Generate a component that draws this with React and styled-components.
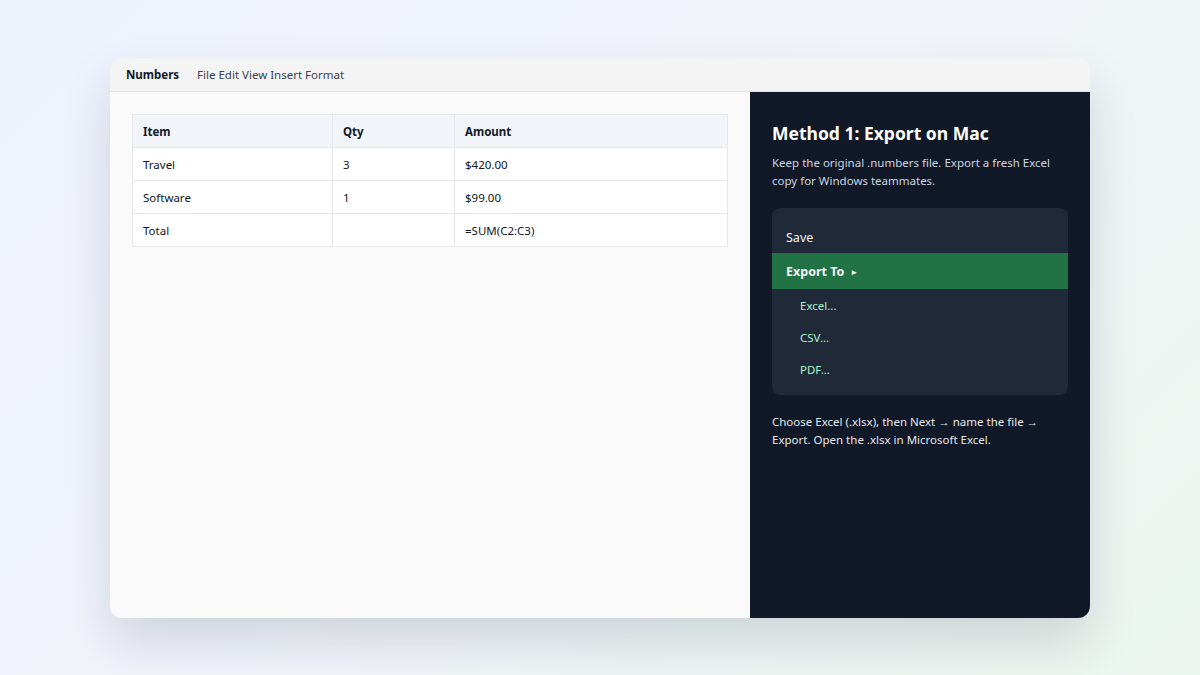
import React from 'react';
import styled, { createGlobalStyle } from 'styled-components';

const GlobalStyle = createGlobalStyle`
  html, body {
    margin: 0;
    padding: 0;
  }
  body {
    font-family: "Noto Sans", "Open Sans", sans-serif;
  }
`;

const Page = styled.div`
  width: 1200px;
  height: 675px;
  box-sizing: border-box;
  padding-top: 58px;
  display: flex;
  justify-content: center;
  align-items: flex-start;
  background: linear-gradient(135deg, #eef2fd 0%, #f1f4fa 50%, #ebf6ee 100%);
  overflow: hidden;
`;

const Window = styled.div`
  width: 980px;
  height: 560px;
  border-radius: 12px;
  overflow: hidden;
  display: flex;
  flex-direction: column;
  box-shadow: 0 24px 50px rgba(15, 23, 42, 0.14);
`;

const TitleBar = styled.div`
  height: 33px;
  flex-shrink: 0;
  display: flex;
  align-items: center;
  gap: 18px;
  padding: 0 16px;
  background: #f4f4f5;
  border-bottom: 1px solid #e4e4e7;
  font-size: 11.5px;
`;

const AppName = styled.span`
  font-weight: 700;
  color: #111827;
`;

const MenuNames = styled.span`
  color: #374151;
`;

const Body = styled.div`
  flex: 1;
  display: flex;
  min-height: 0;
`;

const Sheet = styled.div`
  width: 640px;
  box-sizing: border-box;
  padding: 22px;
  background: #fafafa;
`;

const Table = styled.table`
  width: 596px;
  border-collapse: collapse;
  background: #ffffff;
  font-size: 11.5px;
  color: #111827;
`;

const Cell = styled.td`
  height: 33px;
  box-sizing: border-box;
  padding: 0 10px;
  border: 1px solid #e5e7eb;
  font-weight: ${(p) => (p.$head ? 700 : 400)};
  background: ${(p) => (p.$head ? '#f1f5f9' : '#ffffff')};
  width: ${(p) => p.$w || 'auto'};
`;

const Panel = styled.div`
  flex: 1;
  box-sizing: border-box;
  padding: 28px 22px;
  background: #111827;
  color: #ffffff;
`;

const Heading = styled.h2`
  margin: 0 0 8px;
  font-size: 17.5px;
  font-weight: 700;
  line-height: 26px;
`;

const Text = styled.p`
  margin: 0;
  font-size: 11.5px;
  line-height: 18px;
  color: ${(p) => p.$color || '#cbd5e1'};
`;

const Menu = styled.div`
  margin: 18px 0 18px;
  padding: 13px 0 10px;
  background: #1f2937;
  border-radius: 8px;
`;

const MenuItem = styled.div`
  display: flex;
  align-items: center;
  gap: 6px;
  height: ${(p) => (p.$active ? '36px' : '32px')};
  padding-left: ${(p) => (p.$sub ? '28px' : '14px')};
  font-size: ${(p) => (p.$sub ? '11.5px' : '12.5px')};
  font-weight: ${(p) => (p.$active ? 700 : 400)};
  color: ${(p) => (p.$sub ? '#a7f3d0' : '#f3f4f6')};
  background: ${(p) => (p.$active ? '#217346' : 'transparent')};
`;

const Arrow = styled.span`
  font-size: 8px;
`;

const rows = [
  ['Travel', '3', '$420.00'],
  ['Software', '1', '$99.00'],
  ['Total', '', '=SUM(C2:C3)'],
];

export default function App() {
  return (
    <Page>
      <GlobalStyle />
      <Window>
        <TitleBar>
          <AppName>Numbers</AppName>
          <MenuNames>File Edit View Insert Format</MenuNames>
        </TitleBar>
        <Body>
          <Sheet>
            <Table>
              <tbody>
                <tr>
                  <Cell $head $w="200px">Item</Cell>
                  <Cell $head $w="122px">Qty</Cell>
                  <Cell $head>Amount</Cell>
                </tr>
                {rows.map((r) => (
                  <tr key={r[0]}>
                    {r.map((v, i) => (
                      <Cell key={i}>{v}</Cell>
                    ))}
                  </tr>
                ))}
              </tbody>
            </Table>
          </Sheet>
          <Panel>
            <Heading>Method 1: Export on Mac</Heading>
            <Text>Keep the original .numbers file. Export a fresh Excel copy for Windows teammates.</Text>
            <Menu>
              <MenuItem>Save</MenuItem>
              <MenuItem $active>
                Export To <Arrow>►</Arrow>
              </MenuItem>
              <MenuItem $sub>Excel...</MenuItem>
              <MenuItem $sub>CSV...</MenuItem>
              <MenuItem $sub>PDF...</MenuItem>
            </Menu>
            <Text $color="#e5e7eb">
              Choose Excel (.xlsx), then Next → name the file → Export. Open the .xlsx in Microsoft Excel.
            </Text>
          </Panel>
        </Body>
      </Window>
    </Page>
  );
}
